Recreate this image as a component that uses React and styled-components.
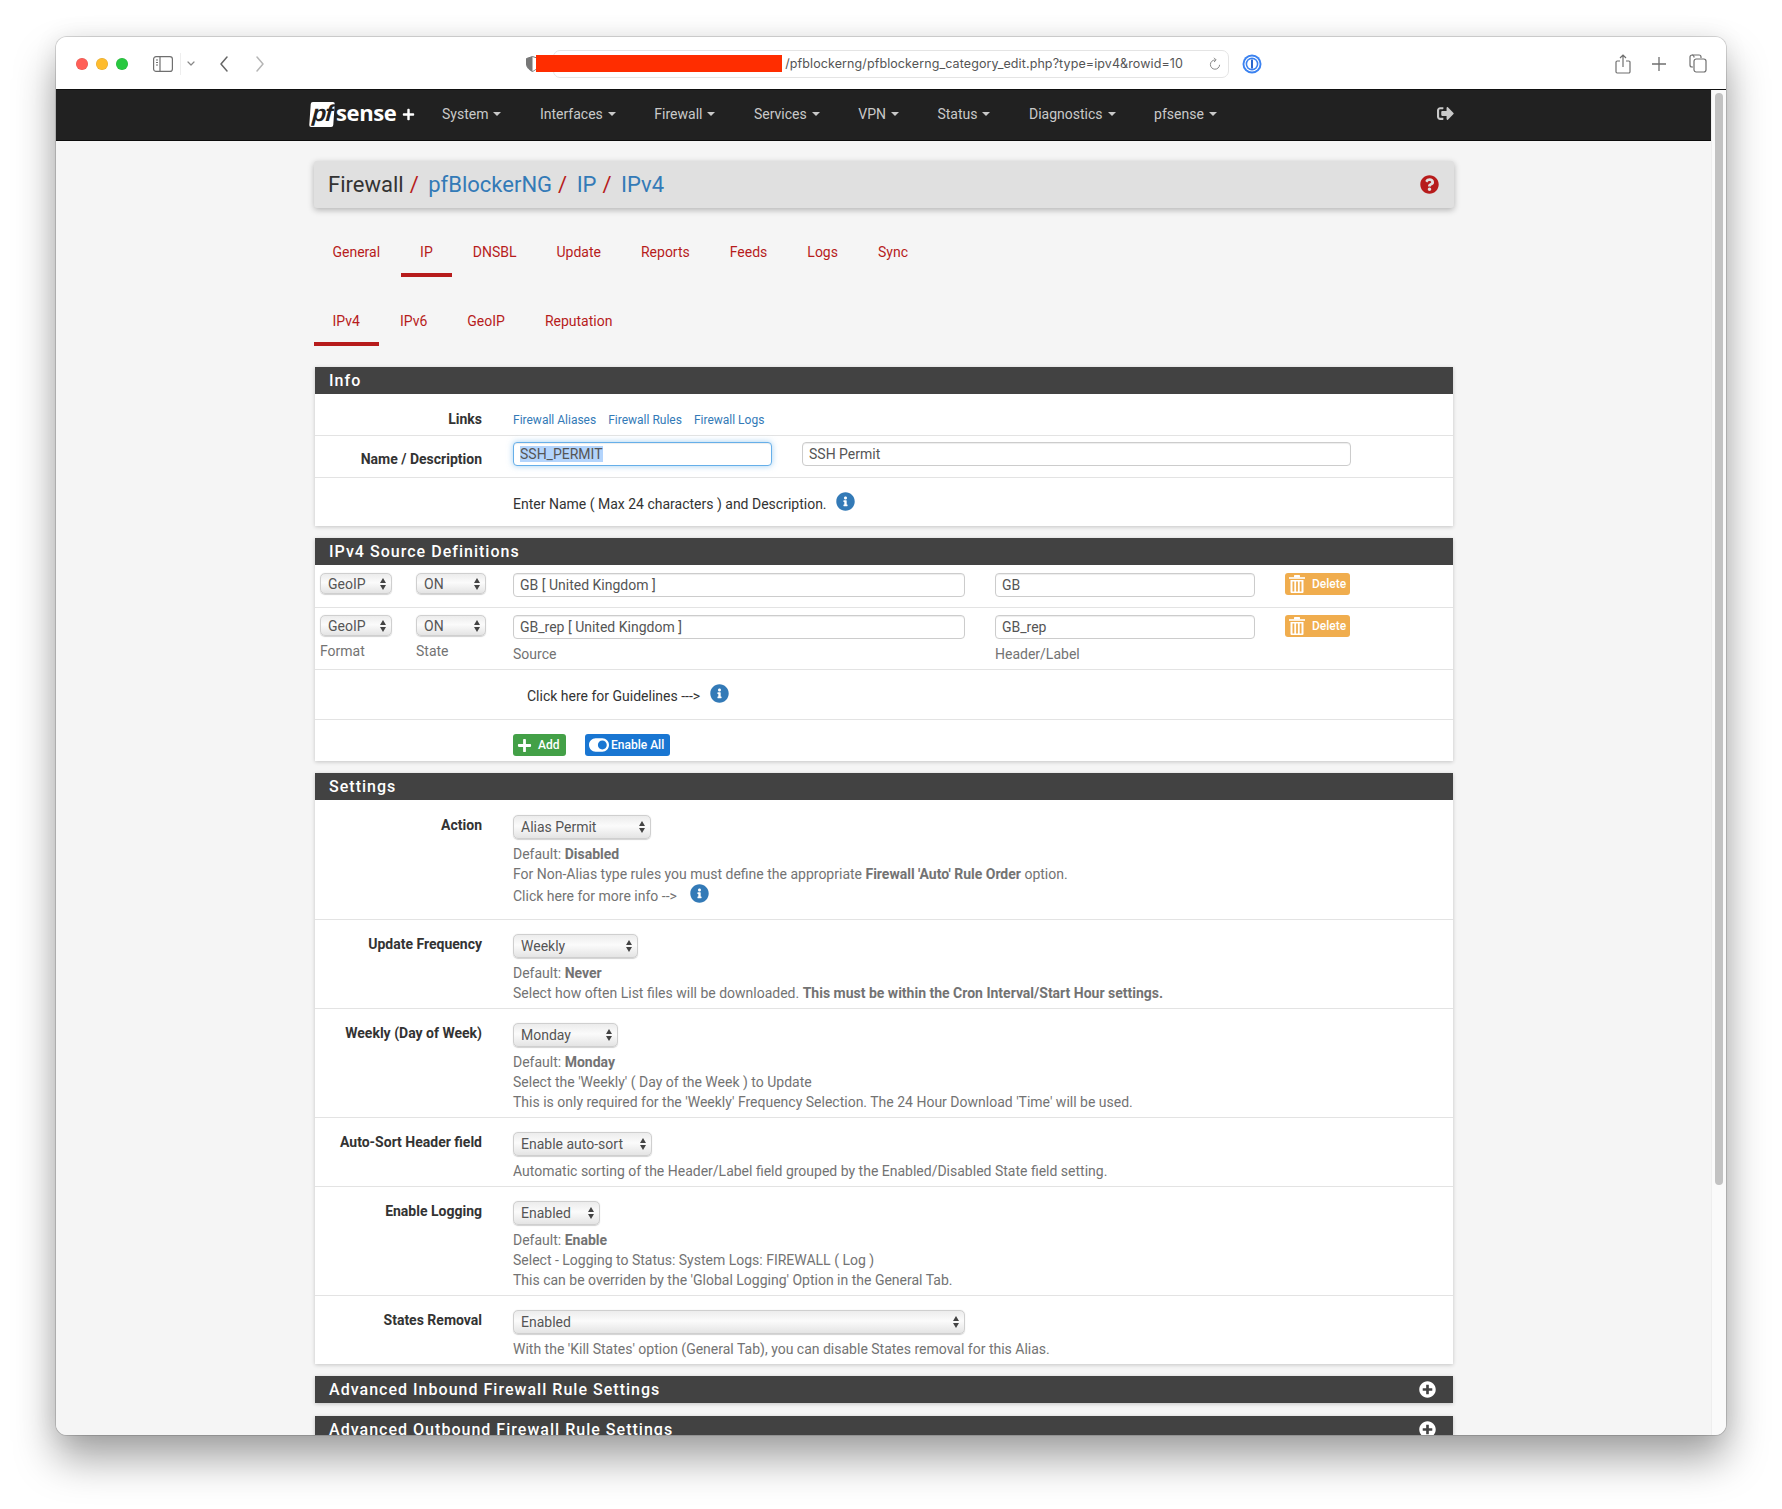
import React, { useEffect, useRef } from "react";
import styled, { createGlobalStyle } from "styled-components";
import { FaInfoCircle, FaQuestionCircle, FaPlusCircle, FaPlus, FaSignOutAlt, FaToggleOn } from "react-icons/fa";

const Global = createGlobalStyle`
  html, body { margin: 0; padding: 0; background: #fff; }
  body { font-family: Roboto, "Liberation Sans", sans-serif; font-size: 14px; color: #333; }
  * { box-sizing: border-box; }
`;

const Stage = styled.div`
  width: 1782px; height: 1509px; padding: 37px 56px 74px; overflow: hidden;
`;
const Win = styled.div`
  width: 1670px; height: 1398px; border-radius: 11px; overflow: hidden; display: flex; flex-direction: column;
  background: #f5f5f5;
  box-shadow: 0 0 0 1px rgba(0,0,0,.14), 0 24px 42px rgba(0,0,0,.36), 0 0 24px rgba(0,0,0,.08);
`;
const Toolbar = styled.div`
  height: 53px; flex: none; background: #fff; display: flex; align-items: center; position: relative; padding: 1px 0 0 20px;
  border-bottom: 1px solid #111;
`;
const Lights = styled.div` display: flex; gap: 8px; `;
const Light = styled.span`
  width: 12px; height: 12px; border-radius: 50%; background: ${p => p.$c}; box-shadow: inset 0 0 0 .5px rgba(0,0,0,.12);
`;
const ToolIcon = styled.svg`
  flex: none; margin-left: ${p => p.$ml || 0}px; color: ${p => p.$c || "#6f6f6f"}; display: block;
`;
const Divider = styled.span` width: 1px; height: 22px; background: #eee; margin-left: 7px; flex: none; `;
const AddressBar = styled.div`
  width: 676px; height: 28px; margin-left: 14px; flex: none; border: 1px solid #e4e4e4; border-radius: 7px;
  display: flex; align-items: center; justify-content: flex-end; padding-right: 7px; font-family: Inter, Roboto, sans-serif;
  font-size: 12.5px; letter-spacing: .1px; color: #555;
`;
const Redact = styled.span`
  position: absolute; left: 479.5px; top: 18px; width: 246px; height: 17px; background: #ff2d00;
`;
const Url = styled.span` margin-right: 26px; white-space: nowrap; `;

const Body = styled.div` flex: 1; min-height: 0; display: flex; `;
const Page = styled.div` width: 1655px; flex: none; overflow: hidden; background: #f5f5f5; `;
const Track = styled.div` width: 15px; flex: none; background: #fafafa; border-left: 1px solid #eee; padding: 3px 3px 0 3px; `;
const Thumb = styled.div` width: 8px; height: 1092px; background: #c2c2c2; border-radius: 4px; `;

const Navbar = styled.nav`
  height: 51px; background: #212121; border-bottom: 1px solid #0c0c0c; display: flex; align-items: center; padding: 0 0 2px 254px;
`;
const Logo = styled.div` display: flex; align-items: center; width: 132px; height: 25px; flex: none; `;
const LogoBox = styled.span`
  width: 24px; height: 25px; background: #fff; color: #212121; border-radius: 2px; font: italic 700 23px/23px "Liberation Sans", sans-serif;
  display: flex; justify-content: center; letter-spacing: -1px; transform: skewX(-4deg);
`;
const LogoWord = styled.span` color: #fff; font: 700 22px/22px "Open Sans", sans-serif; margin-left: 2px; letter-spacing: -.4px; position: relative; top: -2px; `;
const LogoPlus = styled.span` color: #fff; margin-left: 6px; display: flex; `;
const NavItems = styled.div` display: flex; `;
const NavItem = styled.a`
  color: #c9c9c9; font-size: 14px; display: flex; align-items: center; gap: 5px; padding-right: 38.5px; white-space: nowrap;
  &::after { content: ""; border-top: 4px solid #c9c9c9; border-left: 4px solid transparent; border-right: 4px solid transparent; }
`;
const NavLogout = styled.span` color: #c9c9c9; margin: 0 0 2px 182px; display: flex; `;

const Container = styled.main` width: 1140px; margin-left: 258px; padding-top: 20px; `;
const Crumbs = styled.header`
  height: 47px; background: #e0e0e0; border-radius: 3px; box-shadow: 0 2px 6px rgba(0,0,0,.28); display: flex; align-items: center;
  justify-content: space-between; padding: 0 15px 0 14px; font-size: 22px; color: #333;
`;
const CrumbTrail = styled.h1` margin: 0; font: inherit; display: flex; `;
const Crumb = styled.span` color: ${p => p.$link ? "#337ab7" : "#333"}; `;
const Slash = styled.span` color: #b71c1c; margin: 0 9.5px 0 6px; `;
const Help = styled.span` color: #b71c1c; display: flex; font-size: 19px; `;

const Tabs = styled.div` display: flex; gap: 2px; margin: 19px 0 0 -.5px; `;
const Tab = styled.a`
  height: 50px; padding: 4px 19px 0; color: #b71c1c; display: flex; align-items: center; font-size: 14px;
  border-bottom: 4px solid ${p => p.$active ? "#b71c1c" : "transparent"};
`;
const Panel = styled.section` margin: ${p => p.$mt || 11}px 1px 0; box-shadow: 0 1px 4px rgba(0,0,0,.2); `;
const PanelHead = styled.div`
  height: 27px; background: #424242; color: #fff; font-size: 16px; font-weight: 500; letter-spacing: 1.02px; padding: 0 14px;
  display: flex; align-items: center; justify-content: space-between;
  svg { font-size: 17px; margin-right: 3px; }
`;
const PanelBody = styled.div` background: #fff; `;
const Row = styled.div`
  display: grid; grid-template-columns: 167px 1fr; column-gap: 31px; border-top: ${p => p.$first ? "0" : "1px solid #e3e3e3"};
  height: ${p => p.$h}px; padding-top: ${p => p.$pt ?? 14}px;
`;
const Label = styled.label`
  text-align: right; font-weight: 700; font-size: 14px; line-height: 20px; color: #333; padding-top: ${p => p.$pt || 0}px;
`;
const Value = styled.div` display: flex; flex-direction: column; align-items: flex-start; min-width: 0; `;
const Links = styled.div` display: flex; gap: 12px; font-size: 12px; line-height: 20px; color: #337ab7; padding-top: 2px; align-self: start; `;
const Inline = styled.div` display: flex; gap: ${p => p.$gap || 0}px; align-items: center; align-self: start; `;
const TextInput = styled.input`
  display: block; width: ${p => p.$w}px; height: 24px; border: 1px solid #ccc; border-radius: 4px; padding: 0 6px; font: 14px Roboto, sans-serif;
  color: #555; background: #fff; outline: none; box-shadow: inset 0 1px 1px rgba(0,0,0,.075);
  &:focus { border-color: #66afe9; box-shadow: inset 0 1px 1px rgba(0,0,0,.075), 0 0 6px rgba(102,175,233,.6); }
  &::selection { background: #b3d4fc; color: #555; }
`;
const SelectWrap = styled.div`
  position: relative; width: ${p => p.$w}px; height: ${p => p.$h || 24}px; flex: none;
  &::before, &::after { content: ""; position: absolute; right: 6.5px; border-left: 3.5px solid transparent; border-right: 3.5px solid transparent; pointer-events: none; }
  &::before { top: calc(50% - 6px); border-bottom: 5px solid #444; }
  &::after { top: calc(50% + 1px); border-top: 5px solid #444; }
`;
const Select = styled.select`
  appearance: none; width: 100%; height: 100%; display: block; border: 1px solid #cfcfcf; border-radius: 5px; padding: 0 0 0 7px; font: 14px Roboto, sans-serif;
  color: #555; background: linear-gradient(#ececec, #fbfbfb 45%, #e4e4e4); box-shadow: 0 .5px 1px rgba(0,0,0,.18); outline: none;
`;
const Hint = styled.div`
  margin-top: 5px; color: #737373; font-size: 14px; line-height: 20px; white-space: nowrap;
  b { font-weight: 700; }
`;
const Plain = styled.div`
  color: #333; font-size: 14px; line-height: 20px; display: flex; align-items: center; align-self: start; gap: ${p => p.$gap || 9}px; margin-left: ${p => p.$ml || 0}px;
`;
const Info = styled.span`
  color: #337ab7; font-size: 19px; display: inline-flex; margin-left: ${p => p.$ml || 0}px; vertical-align: -2px; position: relative; top: ${p => p.$top || 0}px;
`;
const SourceRow = styled.div`
  display: grid; grid-template-columns: 96px 97px 482px 290px 65px; padding: ${p => p.$pt || 8}px 0 0 5px; height: ${p => p.$h}px; border-top: ${p => p.$first ? "0" : "1px solid #e3e3e3"};
`;
const Cell = styled.div` min-width: 0; `;
const SmallNote = styled.div` color: #737373; font-size: 14px; line-height: 20px; margin-top: ${p => p.$mt || 0}px; `;
const Btn = styled.a`
  display: inline-flex; align-items: center; height: 22px; width: ${p => p.$w}px; padding-left: ${p => p.$pl || 4}px; gap: ${p => p.$gap || 4}px; border-radius: 3px; background: ${p => p.$bg};
  color: #fff; font-size: 12px; font-weight: 500; white-space: nowrap; flex: none;
`;

const Trash = () => (
  <svg width="16" height="18" viewBox="0 0 16 18" fill="#fff" style={{ flex: "none" }}>
    <rect x="0" y="2.2" width="16" height="1.6" />
    <rect x="5" y="0" width="6" height="2.4" rx=".6" />
    <path d="M1.500 5h13v12a1 1 0 0 1-1 1h-11a1 1 0 0 1-1-1zM3.500 6.500v10h1.800v-10zm3.600 0v10h1.800v-10zm3.600 0v10h1.800v-10z" fillRule="evenodd" />
  </svg>
);

const Spin = ({ v, w, h, name }) => (
  <SelectWrap $w={w} $h={h}><Select aria-label={name} defaultValue={v}><option>{v}</option></Select></SelectWrap>
);

const SidebarIcon = () => (
  <ToolIcon $ml={25} width="20" height="16" viewBox="0 0 20 16" fill="none" stroke="currentColor" strokeWidth="1.2">
    <rect x=".6" y=".6" width="18.8" height="14.8" rx="2.5" />
    <path d="M7 .6v14.8" />
    <path d="M3 4h2M3 6.5h2M3 9h2" />
  </ToolIcon>
);
const Chev = ({ d, ml, w = 10, h = 18, c, sw = 1.5 }) => (
  <ToolIcon $ml={ml} $c={c} width={w} height={h} viewBox={`0 0 ${w} ${h}`} fill="none" stroke="currentColor" strokeWidth={sw} strokeLinecap="round" strokeLinejoin="round">
    <path d={d} />
  </ToolIcon>
);

export default function App() {
  const ref = useRef(null);
  useEffect(() => { if (ref.current) { ref.current.focus(); ref.current.select(); } }, []);
  return (
    <>
      <Global />
      <Stage>
        <Win>
          <Toolbar>
            <Lights><Light $c="#ff5f57" /><Light $c="#febc2e" /><Light $c="#28c840" /></Lights>
            <SidebarIcon />
            <Divider />
            <Chev ml={6} w={8} h={6} d="M1 1l3 3 3-3" c="#888" sw={1.2} />
            <Chev ml={24} d="M8 2L2 9l6 7" c="#666" />
            <Chev ml={26} d="M2 2l6 7-6 7" c="#b5b5b5" />
            <ToolIcon $ml={261} width="13" height="16" viewBox="0 0 13 16">
              <path d="M6.5.5L12.5 2.500V8c0 3.500-3 6.200-6 7.500C3.500 14.200.5 11.500.5 8V2.500z" fill="#fff" stroke="#777" />
              <path d="M6.5.5L.5 2.500V8c0 3.500 3 6.200 6 7.500z" fill="#777" />
            </ToolIcon>
            <AddressBar>
              <Url>/pfblockerng/pfblockerng_category_edit.php?type=ipv4&amp;rowid=10</Url>
              <ToolIcon width="12" height="14" viewBox="0 0 12 14" fill="none" stroke="#888" strokeWidth="1">
                <path d="M6 3a4.600 4.600 0 1 0 4.600 4.800" />
                <path d="M5 .8L7.200 3 5 5" />
              </ToolIcon>
            </AddressBar>
            <Redact />
            <ToolIcon $ml={13} width="20" height="20" viewBox="0 0 20 20">
              <circle cx="10" cy="10" r="9.5" fill="#3b82f0" />
              <circle cx="10" cy="10" r="7.6" fill="#fff" />
              <circle cx="10" cy="10" r="6.4" fill="#3b82f0" />
              <circle cx="10" cy="10" r="4.8" fill="#fff" />
              <rect x="9" y="5.500" width="2" height="9" rx=".6" fill="#2a66cc" />
            </ToolIcon>
            <ToolIcon $ml={353} width="16" height="20" viewBox="0 0 16 20" fill="none" stroke="currentColor" strokeWidth="1.2">
              <path d="M5 7H2.200a1.200 1.200 0 0 0-1.200 1.200v9.600A1.200 1.200 0 0 0 2.200 19h11.600a1.200 1.200 0 0 0 1.200-1.200V8.200A1.200 1.200 0 0 0 13.800 7H11" />
              <path d="M8 13V1M5 4l3-3 3 3" />
            </ToolIcon>
            <ToolIcon $ml={21} width="14" height="14" viewBox="0 0 14 14" fill="none" stroke="currentColor" strokeWidth="1.3"><path d="M7 0v14M0 7h14" /></ToolIcon>
            <ToolIcon $ml={23} width="18" height="19" viewBox="0 0 18 19" fill="none" stroke="currentColor" strokeWidth="1.2">
              <path d="M5 3.500V3a2 2 0 0 0-2-2h0a2 2 0 0 0-2 2v8a2 2 0 0 0 2 2h1" />
              <path d="M3 1h7a2 2 0 0 1 2 2v1" />
              <rect x="5" y="5" width="12" height="13" rx="2.200" />
            </ToolIcon>
          </Toolbar>
          <Body>
            <Page>
              <Navbar>
                <Logo>
                  <LogoBox>pf</LogoBox>
                  <LogoWord>sense</LogoWord>
                  <LogoPlus><FaPlus size={13} /></LogoPlus>
                </Logo>
                <NavItems>
                  {["System", "Interfaces", "Firewall", "Services", "VPN", "Status", "Diagnostics", "pfsense"].map(n => <NavItem key={n}>{n}</NavItem>)}
                </NavItems>
                <NavLogout><FaSignOutAlt size={17} /></NavLogout>
              </Navbar>
              <Container>
                <Crumbs>
                  <CrumbTrail>
                    <Crumb>Firewall</Crumb><Slash>/</Slash>
                    <Crumb $link>pfBlockerNG</Crumb><Slash>/</Slash>
                    <Crumb $link>IP</Crumb><Slash>/</Slash>
                    <Crumb $link>IPv4</Crumb>
                  </CrumbTrail>
                  <Help><FaQuestionCircle /></Help>
                </Crumbs>
                <Tabs>
                  {["General", "IP", "DNSBL", "Update", "Reports", "Feeds", "Logs", "Sync"].map(t => <Tab key={t} $active={t === "IP"}>{t}</Tab>)}
                </Tabs>
                <Tabs>
                  {["IPv4", "IPv6", "GeoIP", "Reputation"].map(t => <Tab key={t} $active={t === "IPv4"}>{t}</Tab>)}
                </Tabs>
                <Panel $mt={21}>
                  <PanelHead>Info</PanelHead>
                  <PanelBody>
                    <Row $first $h={41} $pt={14}>
                      <Label $pt={1}>Links</Label>
                      <Links><span>Firewall Aliases</span><span>Firewall Rules</span><span>Firewall Logs</span></Links>
                    </Row>
                    <Row $h={42} $pt={6}>
                      <Label $pt={7}>Name / Description</Label>
                      <Inline $gap={30}>
                        <TextInput ref={ref} $w={259} defaultValue="SSH_PERMIT" aria-label="Name" />
                        <TextInput $w={549} defaultValue="SSH Permit" aria-label="Description" />
                      </Inline>
                    </Row>
                    <Row $h={49} $pt={16}>
                      <span />
                      <Plain>Enter Name ( Max 24 characters ) and Description.<Info $top={-3}><FaInfoCircle /></Info></Plain>
                    </Row>
                  </PanelBody>
                </Panel>
                <Panel $mt={12}>
                  <PanelHead>IPv4 Source Definitions</PanelHead>
                  <PanelBody>
                    <SourceRow $first $h={42}>
                      <Cell><Spin v="GeoIP" w={72} h={21} name="Format" /></Cell>
                      <Cell><Spin v="ON" w={70} h={21} name="State" /></Cell>
                      <Cell><TextInput $w={452} defaultValue="GB [ United Kingdom ]" aria-label="Source" /></Cell>
                      <Cell><TextInput $w={260} defaultValue="GB" aria-label="Header" /></Cell>
                      <Btn $bg="#f0ad4e" $w={65} $gap={7}><Trash /> Delete</Btn>
                    </SourceRow>
                    <SourceRow $h={62} $pt={7}>
                      <Cell><Spin v="GeoIP" w={72} h={21} name="Format" /><SmallNote $mt={5}>Format</SmallNote></Cell>
                      <Cell><Spin v="ON" w={70} h={21} name="State" /><SmallNote $mt={5}>State</SmallNote></Cell>
                      <Cell><TextInput $w={452} defaultValue="GB_rep [ United Kingdom ]" aria-label="Source" /><SmallNote $mt={5}>Source</SmallNote></Cell>
                      <Cell><TextInput $w={260} defaultValue="GB_rep" aria-label="Header" /><SmallNote $mt={5}>Header/Label</SmallNote></Cell>
                      <Btn $bg="#f0ad4e" $w={65} $gap={7}><Trash /> Delete</Btn>
                    </SourceRow>
                    <Row $h={50} $pt={16}>
                      <span />
                      <Plain $ml={14} $gap={10}>Click here for Guidelines ---&gt;<Info $top={-3}><FaInfoCircle /></Info></Plain>
                    </Row>
                    <Row $h={42} $pt={14}>
                      <span />
                      <Inline $gap={19}>
                        <Btn $bg="#43a047" $w={53} $gap={6}><FaPlus size={15} /> Add</Btn>
                        <Btn $bg="#1976d2" $w={85} $gap={2}><FaToggleOn size={20} /> Enable All</Btn>
                      </Inline>
                    </Row>
                  </PanelBody>
                </Panel>
                <Panel $mt={12}>
                  <PanelHead>Settings</PanelHead>
                  <PanelBody>
                    <Row $first $h={119} $pt={15}>
                      <Label>Action</Label>
                      <Value>
                        <Spin v="Alias Permit" w={138} name="Action" />
                        <Hint>Default: <b>Disabled</b><br />For Non-Alias type rules you must define the appropriate <b>Firewall 'Auto' Rule Order</b> option.<br />Click here for more info --&gt;<Info $ml={13}><FaInfoCircle /></Info></Hint>
                      </Value>
                    </Row>
                    <Row $h={89}>
                      <Label>Update Frequency</Label>
                      <Value>
                        <Spin v="Weekly" w={125} name="Update Frequency" />
                        <Hint>Default: <b>Never</b><br />Select how often List files will be downloaded. <b>This must be within the Cron Interval/Start Hour settings.</b></Hint>
                      </Value>
                    </Row>
                    <Row $h={109}>
                      <Label>Weekly (Day of Week)</Label>
                      <Value>
                        <Spin v="Monday" w={105} name="Weekly" />
                        <Hint>Default: <b>Monday</b><br />Select the 'Weekly' ( Day of the Week ) to Update<br />This is only required for the 'Weekly' Frequency Selection. The 24 Hour Download 'Time' will be used.</Hint>
                      </Value>
                    </Row>
                    <Row $h={69}>
                      <Label>Auto-Sort Header field</Label>
                      <Value>
                        <Spin v="Enable auto-sort" w={139} name="Auto-Sort" />
                        <Hint>Automatic sorting of the Header/Label field grouped by the Enabled/Disabled State field setting.</Hint>
                      </Value>
                    </Row>
                    <Row $h={109}>
                      <Label>Enable Logging</Label>
                      <Value>
                        <Spin v="Enabled" w={87} name="Enable Logging" />
                        <Hint>Default: <b>Enable</b><br />Select - Logging to Status: System Logs: FIREWALL ( Log )<br />This can be overriden by the 'Global Logging' Option in the General Tab.</Hint>
                      </Value>
                    </Row>
                    <Row $h={69}>
                      <Label>States Removal</Label>
                      <Value>
                        <Spin v="Enabled" w={452} name="States Removal" />
                        <Hint>With the 'Kill States' option (General Tab), you can disable States removal for this Alias.</Hint>
                      </Value>
                    </Row>
                  </PanelBody>
                </Panel>
                <Panel $mt={12}><PanelHead>Advanced Inbound Firewall Rule Settings<FaPlusCircle /></PanelHead></Panel>
                <Panel $mt={13}><PanelHead>Advanced Outbound Firewall Rule Settings<FaPlusCircle /></PanelHead></Panel>
              </Container>
            </Page>
            <Track><Thumb /></Track>
          </Body>
        </Win>
      </Stage>
    </>
  );
}
